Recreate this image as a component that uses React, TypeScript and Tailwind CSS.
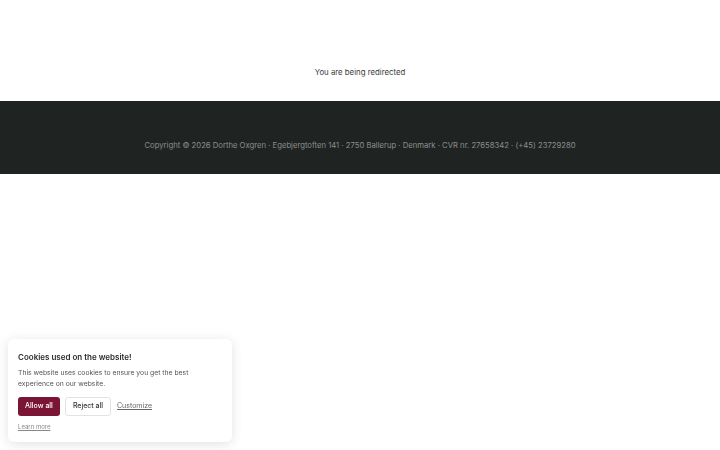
export default function App() {
  return (
    <div className="min-h-[450px] bg-white font-['Inter',sans-serif]">
      <div className="flex h-[101px] items-start justify-center pt-[66px]">
        <p className="text-[7.8px] leading-[12px] text-[#3a3a3a]">You are being redirected</p>
      </div>
      <footer className="flex h-[73px] items-start justify-center bg-[#1f2322] pt-[39px]">
        <p className="text-[7.7px] leading-[12px] text-[#8b8f8e]">
          Copyright © 2026 Dorthe Oxgren · Egebjergtoften 141 · 2750 Ballerup · Denmark · CVR nr. 27658342 · (+45) 23729280
        </p>
      </footer>

      <div className="fixed bottom-2 left-2 w-[224px] rounded-md bg-white px-[10px] pb-[10px] pt-[12px] shadow-[0_2px_12px_rgba(0,0,0,0.12)]">
        <h2 className="text-[8px] font-semibold leading-[12px] text-[#2b2b2b]">Cookies used on the website!</h2>
        <p className="mt-[4px] text-[6.8px] leading-[11px] text-[#555]">
          This website uses cookies to ensure you get the best experience on our website.
        </p>
        <div className="mt-[8px] flex items-center gap-[5px]">
          <button className="h-[19px] w-[42px] rounded-[3px] bg-[#7b1535] text-[7px] font-medium text-white">Allow all</button>
          <button className="h-[19px] w-[46px] rounded-[3px] border border-[#e3e3e3] bg-white text-[7px] font-medium text-[#333]">
            Reject all
          </button>
          <button className="ml-[1px] text-[7px] text-[#666] underline">Customize</button>
        </div>
        <a className="mt-[6px] block text-[6px] leading-[10px] text-[#888] underline">Learn more</a>
      </div>
    </div>
  );
}
